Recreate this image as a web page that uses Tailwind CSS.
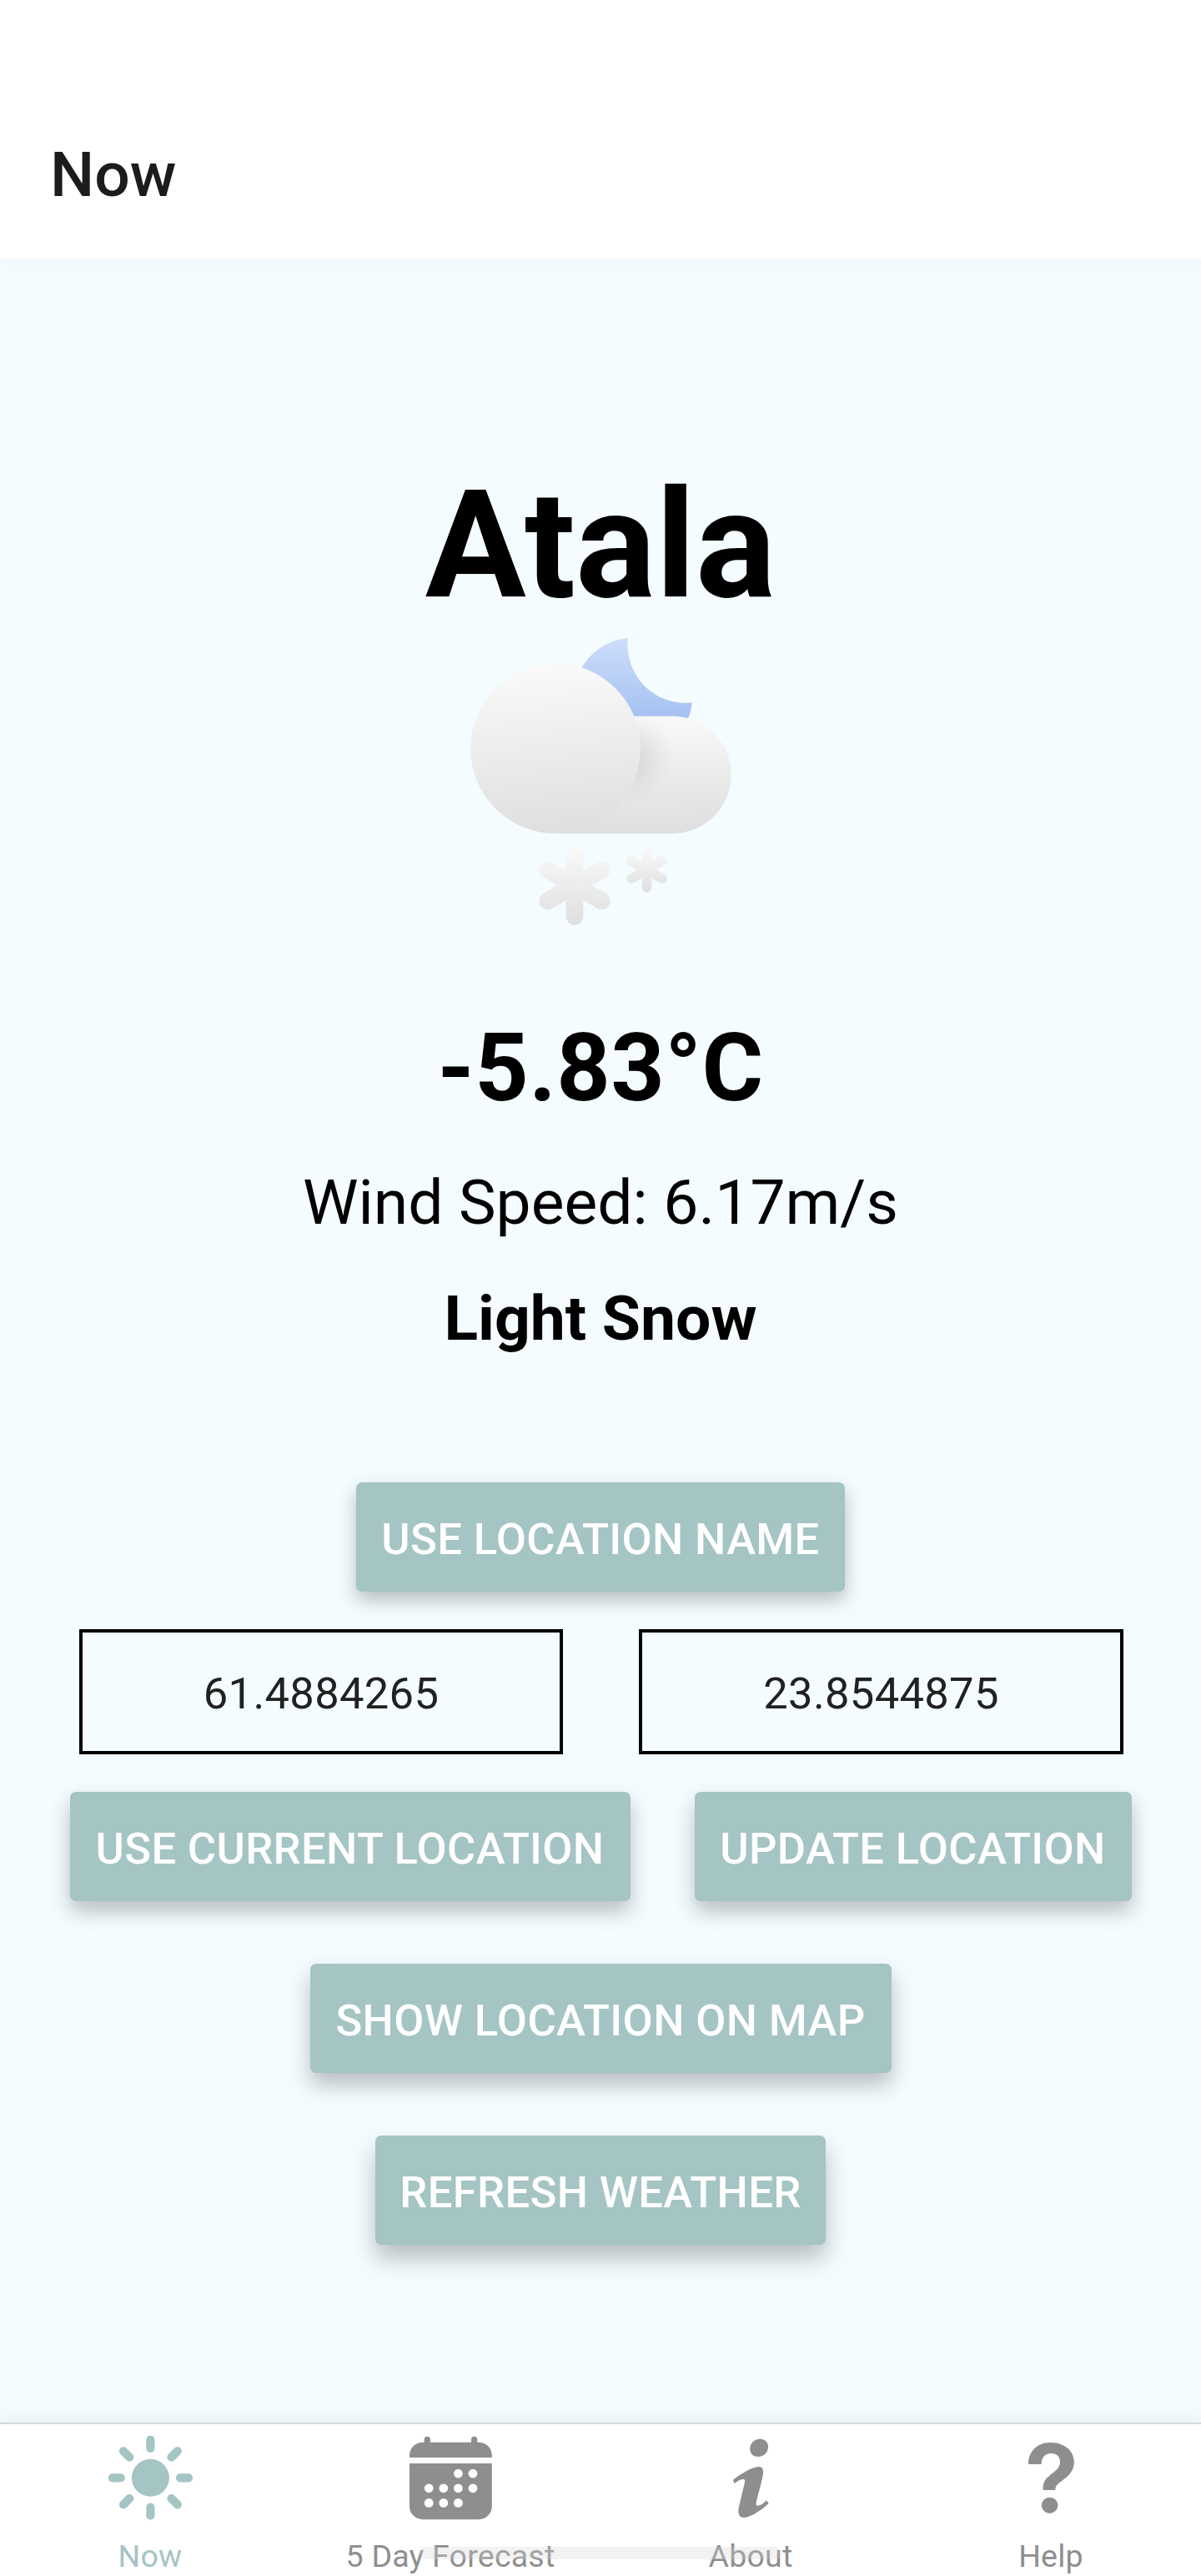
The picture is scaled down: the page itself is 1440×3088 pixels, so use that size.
<!DOCTYPE html>
<html lang="en">
<head>
<meta charset="utf-8">
<title>Now</title>
<script src="https://cdn.jsdelivr.net/npm/@tailwindcss/browser@4"></script>
</head>
<body class="bg-white">
<div class="relative flex h-[3088px] w-[1440px] flex-col overflow-hidden font-['Roboto',sans-serif] text-black">
  <header class="relative z-10 h-[310px] shrink-0 bg-white pt-[159px] pl-[60px] shadow-[0_2px_26px_rgba(0,0,0,0.035)]">
    <h1 class="text-[75px] leading-[100px] font-medium text-[#1c1c1e]">Now</h1>
  </header>

  <main class="flex flex-1 flex-col items-center bg-[#f4fcff] pt-[234px]">
    <h2 class="text-[180px] leading-[220px] font-bold">Atala</h2>

    <!-- Night cloud with snow -->
    <svg class="-mt-px size-[360px] shrink-0" viewBox="0 0 360 360">
      <defs>
        <linearGradient id="moon" x1="0" y1="0" x2="0" y2="1"><stop offset="0" stop-color="#cdddfb"/><stop offset=".7" stop-color="#a4c0f0"/><stop offset="1" stop-color="#a0bcee"/></linearGradient>
        <linearGradient id="cloud" x1=".4" y1="0" x2=".5" y2="1"><stop offset="0" stop-color="#fafafa"/><stop offset="1" stop-color="#dfdfdf"/></linearGradient>
        <linearGradient id="flakeL" gradientUnits="userSpaceOnUse" x1="149" y1="251" x2="149" y2="346"><stop offset="0" stop-color="#fafafa"/><stop offset="1" stop-color="#dfdfdf"/></linearGradient>
        <linearGradient id="flakeS" gradientUnits="userSpaceOnUse" x1="235.6" y1="252" x2="235.6" y2="307"><stop offset="0" stop-color="#fafafa"/><stop offset="1" stop-color="#dfdfdf"/></linearGradient>
        <radialGradient id="shade" gradientUnits="userSpaceOnUse" cx="211" cy="144" r="58"><stop offset="0" stop-color="#000" stop-opacity=".1"/><stop offset=".35" stop-color="#000" stop-opacity=".08"/><stop offset=".65" stop-color="#000" stop-opacity=".035"/><stop offset="1" stop-color="#000" stop-opacity="0"/></radialGradient>
        <clipPath id="pill"><rect x="60" y="95.4" width="276.7" height="140.8" rx="70.4"/></clipPath>
      </defs>
      <path d="M213 2 A71 71 0 1 0 289.7 79.3 A69.5 69.5 0 0 1 213 2Z" fill="url(#moon)"/>
      <rect x="60" y="95.4" width="276.7" height="140.8" rx="70.4" fill="url(#cloud)"/>
      <circle cx="211" cy="144" r="58" fill="url(#shade)" clip-path="url(#pill)"/>
      <circle cx="126" cy="134.2" r="101.9" fill="url(#cloud)"/>
      <path d="M149 261.2V335.6M116.7 279.8L181.3 317M181.3 279.8L116.7 317" stroke="url(#flakeL)" stroke-width="20.6" stroke-linecap="round"/>
      <path d="M235.6 258.2V300.8M217.2 268.9L254 290.1M254 268.9L217.2 290.1" stroke="url(#flakeS)" stroke-width="11.8" stroke-linecap="round"/>
    </svg>

    <p class="mt-[88px] text-[112.5px] leading-[140px] font-bold tracking-[0.4px]">-5.83°C</p>
    <p class="mt-[40px] text-[75px] leading-[100px]">Wind Speed: 6.17m/s</p>
    <p class="mt-[39px] text-[75px] leading-[100px] font-bold">Light Snow</p>

    <button class="mt-[147px] h-[131px] w-[586px] shrink-0 rounded-[7px] bg-[#a5c4c4] pt-[6px] text-[52.5px] font-medium tracking-[0.37px] whitespace-nowrap text-white shadow-[0_10px_22px_rgba(0,0,0,0.25)]">USE LOCATION NAME</button>

    <div class="mt-[45px] ml-[2px] flex w-[1252px] shrink-0 justify-between text-[52.5px] tracking-[0.3px] text-[#212121]">
      <div class="flex h-[150px] w-[580px] items-center justify-center border-4 border-black pt-[4px]">61.4884265</div>
      <div class="flex h-[150px] w-[581px] items-center justify-center border-4 border-black pt-[4px]">23.8544875</div>
    </div>

    <div class="mt-[45px] flex w-[1273px] shrink-0 justify-between text-[52.5px] font-medium tracking-[0.37px] whitespace-nowrap text-white">
      <button class="h-[131px] w-[672px] rounded-[7px] bg-[#a5c4c4] pt-[6px] shadow-[0_12px_24px_rgba(0,0,0,0.25)]">USE CURRENT LOCATION</button>
      <button class="h-[131px] w-[524px] rounded-[7px] bg-[#a5c4c4] pt-[6px] shadow-[0_12px_24px_rgba(0,0,0,0.25)]">UPDATE LOCATION</button>
    </div>

    <button class="mt-[75px] h-[131px] w-[697px] shrink-0 rounded-[7px] bg-[#a5c4c4] pt-[6px] text-[52.5px] font-medium tracking-[0.37px] whitespace-nowrap text-white shadow-[0_14px_26px_rgba(0,0,0,0.25)]">SHOW LOCATION ON MAP</button>
    <button class="mt-[75px] h-[131px] w-[540px] shrink-0 rounded-[7px] bg-[#a5c4c4] pt-[6px] text-[52.5px] font-medium tracking-[0.37px] whitespace-nowrap text-white shadow-[0_16px_28px_rgba(0,0,0,0.25)]">REFRESH WEATHER</button>
  </main>

  <nav class="grid h-[184px] shrink-0 grid-cols-4 border-t-2 border-[#d8d8d8] bg-white text-[37.5px] leading-[44px] tracking-[0.22px] text-[#8e8e8e] shadow-[0_0_24px_rgba(0,0,0,0.07)]">
    <a class="flex flex-col items-center text-[#a5c4c4]">
      <svg class="h-[136px] w-[120px]" viewBox="-60.4 -64.3 120 136" fill="currentColor" stroke="currentColor" stroke-width="10.2" stroke-linecap="round">
        <circle r="22.5" stroke="none"/>
        <path d="M0-45.4V-35.4M0 35.4V45.4M-45.6 0H-35.6M35.6 0H45.6M-32.4-32L-25.1-24.7M32.4-32L25.1-24.7M-32.4 32L-25.1 24.7M32.4 32L25.1 24.7"/>
      </svg>
      <span>Now</span>
    </a>
    <a class="flex flex-col items-center">
      <svg class="h-[136px] w-[120px]" viewBox="0 0 120 136" fill="currentColor">
        <path d="M11 39V37.5A15.8 15.8 0 0 1 26.8 21.7H28.6V18.5A3.65 3.65 0 0 1 35.9 18.5V21.7H85V18.5A3.65 3.65 0 0 1 92.3 18.5V21.7H94A15.8 15.8 0 0 1 109.8 37.5V39.4Q109.8 40 109.2 40H11.6Q11 40 11 39.4Z"/>
        <path d="M11.6 47H109.2Q109.8 47 109.8 47.6V98.4A15.8 15.8 0 0 1 94 114.2H26.8A15.8 15.8 0 0 1 11 98.4V47.6Q11 47 11.6 47Z"/>
        <g fill="#fff"><circle cx="69.4" cy="59.2" r="5.4"/><circle cx="87" cy="59.2" r="5.4"/><circle cx="34.2" cy="76.8" r="5.4"/><circle cx="51.8" cy="76.8" r="5.4"/><circle cx="69.4" cy="76.8" r="5.4"/><circle cx="87" cy="76.8" r="5.4"/><circle cx="34.2" cy="94.4" r="5.4"/><circle cx="51.8" cy="94.4" r="5.4"/><circle cx="69.4" cy="94.4" r="5.4"/></g>
      </svg>
      <span>5 Day Forecast</span>
    </a>
    <a class="flex flex-col items-center">
      <svg class="h-[136px] w-[120px]" viewBox="0 0 120 136" fill="currentColor">
        <path d="M71 17.7C77.5 17.7 81 21.5 81 27.3C81 33.8 76 39 69 39C62.5 39 59.2 35.2 59.2 29.3C59.2 23 64.5 17.7 71 17.7Z"/>
        <path d="M38.8 67C48 59.5 62 51 70 51C74 51 75.5 54 75 59.5C73 72 67.5 88 66.6 95.5C66.6 98.5 68 98 72 96.8C75 95.5 77 93.5 79 91.3L81.6 95C72 104 59 112 52 112C46.5 112 44.7 107.5 45.5 101L53 69.5C53.5 67 53 65.8 50 66C47 66.5 44 68.5 40.8 71Z"/>
      </svg>
      <span>About</span>
    </a>
    <a class="flex flex-col items-center">
      <svg class="h-[136px] w-[120px]" viewBox="0 0 120 136" fill="currentColor">
        <path d="M33 48C33 33 43 22 59.7 22C76 22 87.8 31.5 87.8 45.5C87.8 55 82.5 61 75 66.5C68 72 65.5 73.5 65.3 79H50.6C50.4 71 52 67 57.5 62.5C64 56.5 71 53.5 71 45C71 39 67 35.1 60 35.1C53 35.1 48.8 40 48.6 48Z"/>
        <ellipse cx="58.6" cy="97.3" rx="9.8" ry="9.6"/>
      </svg>
      <span>Help</span>
    </a>
  </nav>

  <!-- System gesture bar lying over the tab labels -->
  <div class="absolute bottom-[20px] left-[503px] h-[15px] w-[434px] rounded-full bg-[#d4d4d4]/30"></div>
</div>
</body>
</html>
